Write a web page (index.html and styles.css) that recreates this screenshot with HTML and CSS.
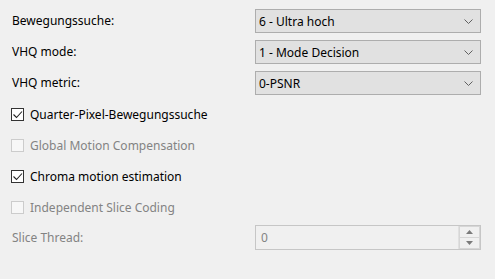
FILE: index.html
```html
<!DOCTYPE html>
<html lang="de">
<head>
<meta charset="utf-8">
<title>Einstellungen</title>
<link rel="stylesheet" href="styles.css">
</head>
<body>
<div class="form">
  <div class="label">Bewegungssuche:</div>
  <div class="select"><span>6 - Ultra hoch</span><svg class="chev" width="9" height="5" viewBox="0 0 9 5"><path d="M0.5 0.5 L4.5 4.5 L8.5 0.5" fill="none" stroke="#606060" stroke-width="1"/></svg></div>

  <div class="label">VHQ mode:</div>
  <div class="select"><span>1 - Mode Decision</span><svg class="chev" width="9" height="5" viewBox="0 0 9 5"><path d="M0.5 0.5 L4.5 4.5 L8.5 0.5" fill="none" stroke="#606060" stroke-width="1"/></svg></div>

  <div class="label">VHQ metric:</div>
  <div class="select"><span>0-PSNR</span><svg class="chev" width="9" height="5" viewBox="0 0 9 5"><path d="M0.5 0.5 L4.5 4.5 L8.5 0.5" fill="none" stroke="#606060" stroke-width="1"/></svg></div>

  <div class="check full"><span class="box"><svg width="11" height="11" viewBox="0 0 11 11"><path d="M1.5 5.5 L4.5 8.5 L10 2.5" fill="none" stroke="#222" stroke-width="1.1"/></svg></span><span>Quarter-Pixel-Bewegungssuche</span></div>
  <div class="check full disabled"><span class="box"></span><span>Global Motion Compensation</span></div>
  <div class="check full"><span class="box"><svg width="11" height="11" viewBox="0 0 11 11"><path d="M1.5 5.5 L4.5 8.5 L10 2.5" fill="none" stroke="#222" stroke-width="1.1"/></svg></span><span>Chroma motion estimation</span></div>
  <div class="check full disabled"><span class="box"></span><span>Independent Slice Coding</span></div>

  <div class="label disabled">Slice Thread:</div>
  <div class="spin">
    <span class="value">0</span>
    <div class="buttons">
      <div class="btn"><svg width="7" height="4" viewBox="0 0 7 4"><path d="M0 4 L3.5 0 L7 4 Z" fill="#7a7a7a"/></svg></div>
      <div class="btn"><svg width="7" height="4" viewBox="0 0 7 4"><path d="M0 0 L3.5 4 L7 0 Z" fill="#7a7a7a"/></svg></div>
    </div>
  </div>
</div>
</body>
</html>
```
FILE: styles.css
```css
html, body {
  margin: 0;
  padding: 0;
  background: #f0f0f0;
}
body {
  font-family: "Noto Sans", "Open Sans", sans-serif;
  font-size: 12px;
  color: #000;
  width: 495px;
  height: 279px;
  overflow: hidden;
}
.form {
  display: grid;
  grid-template-columns: 243px 226px;
  grid-auto-rows: 24px;
  row-gap: 7px;
  padding: 9px 0 0 12px;
}
.label {
  display: flex;
  align-items: center;
  line-height: 1;
}
.select {
  box-sizing: border-box;
  border: 1px solid #adadad;
  background: #e1e1e1;
  display: flex;
  align-items: center;
  justify-content: space-between;
  padding: 0 7px 0 3px;
}
.chev {
  display: block;
}
.full {
  grid-column: 1 / -1;
}
.check {
  display: flex;
  align-items: center;
  margin-left: -1px;
}
.box {
  box-sizing: border-box;
  width: 13px;
  height: 13px;
  border: 1px solid #333;
  background: #fff;
  margin-right: 6px;
  display: flex;
  align-items: center;
  justify-content: center;
}
.box svg {
  display: block;
}
.disabled {
  color: #838383;
}
.disabled .box {
  border-color: #cccccc;
  background: #f7f7f7;
}
.spin {
  box-sizing: border-box;
  height: 25px;
  border: 1px solid #c6c6c6;
  background: #f0f0f0;
  display: flex;
  align-items: stretch;
  justify-content: space-between;
  margin-top: -1px;
}
.value {
  display: flex;
  align-items: center;
  padding-left: 5px;
  color: #838383;
}
.buttons {
  width: 21px;
  display: flex;
  flex-direction: column;
  border-left: 1px solid #e0e0e0;
}
.btn {
  flex: 1;
  display: flex;
  align-items: center;
  justify-content: center;
  background: #f0f0f0;
  border: 1px solid #d6d6d6;
}
.btn + .btn {
  border-top: none;
}
```
